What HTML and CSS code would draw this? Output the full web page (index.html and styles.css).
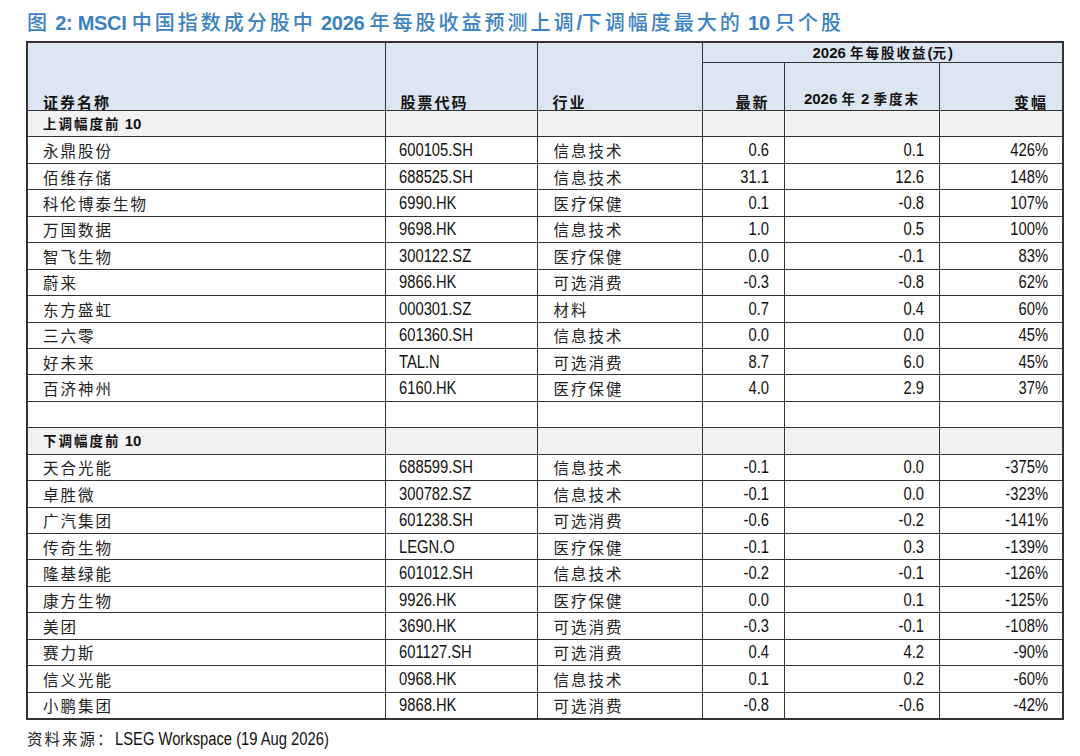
FILE: index.html
```html
<!DOCTYPE html>
<html lang="zh">
<head>
<meta charset="utf-8">
<title>MSCI 中国指数成分股 EPS 预测调整</title>
<link rel="stylesheet" href="styles.css">
</head>
<body>
<div class="page">
  <h1 class="title"><span class="cn">图</span> 2: MSCI <span class="cn">中国指数成分股中</span> 2026 <span class="cn">年每股收益预测上调</span>/<span class="cn">下调幅度最大的</span> 10 <span class="cn">只个股</span></h1>
  <table class="grid">
    <colgroup>
      <col class="c1"><col class="c2"><col class="c3"><col class="c4"><col class="c5"><col class="c6">
    </colgroup>
    <thead>
      <tr class="h1">
        <th rowspan="2" class="hl cnh">证券名称</th>
        <th rowspan="2" class="hl cnh">股票代码</th>
        <th rowspan="2" class="hl cnh">行业</th>
        <th colspan="3" class="hc">2026 <span class="cnh">年每股收益</span>(<span class="cnh">元</span>)</th>
      </tr>
      <tr class="h2">
        <th class="hr cnh">最新</th>
        <th class="hc">2026 <span class="cnh">年</span> 2 <span class="cnh">季度末</span></th>
        <th class="hr cnh">变幅</th>
      </tr>
    </thead>
    <tbody>
      <tr class="sec"><td class="lbl"><span class="cnh">上调幅度前</span> 10</td><td></td><td></td><td></td><td></td><td></td></tr>
      <tr><td class="cn">永鼎股份</td><td><span class="n">600105.SH</span></td><td class="cn">信息技术</td><td class="num"><span class="n">0.6</span></td><td class="num"><span class="n">0.1</span></td><td class="num"><span class="n">426%</span></td></tr>
      <tr><td class="cn">佰维存储</td><td><span class="n">688525.SH</span></td><td class="cn">信息技术</td><td class="num"><span class="n">31.1</span></td><td class="num"><span class="n">12.6</span></td><td class="num"><span class="n">148%</span></td></tr>
      <tr><td class="cn">科伦博泰生物</td><td><span class="n">6990.HK</span></td><td class="cn">医疗保健</td><td class="num"><span class="n">0.1</span></td><td class="num"><span class="n">-0.8</span></td><td class="num"><span class="n">107%</span></td></tr>
      <tr><td class="cn">万国数据</td><td><span class="n">9698.HK</span></td><td class="cn">信息技术</td><td class="num"><span class="n">1.0</span></td><td class="num"><span class="n">0.5</span></td><td class="num"><span class="n">100%</span></td></tr>
      <tr><td class="cn">智飞生物</td><td><span class="n">300122.SZ</span></td><td class="cn">医疗保健</td><td class="num"><span class="n">0.0</span></td><td class="num"><span class="n">-0.1</span></td><td class="num"><span class="n">83%</span></td></tr>
      <tr><td class="cn">蔚来</td><td><span class="n">9866.HK</span></td><td class="cn">可选消费</td><td class="num"><span class="n">-0.3</span></td><td class="num"><span class="n">-0.8</span></td><td class="num"><span class="n">62%</span></td></tr>
      <tr><td class="cn">东方盛虹</td><td><span class="n">000301.SZ</span></td><td class="cn">材料</td><td class="num"><span class="n">0.7</span></td><td class="num"><span class="n">0.4</span></td><td class="num"><span class="n">60%</span></td></tr>
      <tr><td class="cn">三六零</td><td><span class="n">601360.SH</span></td><td class="cn">信息技术</td><td class="num"><span class="n">0.0</span></td><td class="num"><span class="n">0.0</span></td><td class="num"><span class="n">45%</span></td></tr>
      <tr><td class="cn">好未来</td><td><span class="n">TAL.N</span></td><td class="cn">可选消费</td><td class="num"><span class="n">8.7</span></td><td class="num"><span class="n">6.0</span></td><td class="num"><span class="n">45%</span></td></tr>
      <tr><td class="cn">百济神州</td><td><span class="n">6160.HK</span></td><td class="cn">医疗保健</td><td class="num"><span class="n">4.0</span></td><td class="num"><span class="n">2.9</span></td><td class="num"><span class="n">37%</span></td></tr>
      <tr class="blank"><td></td><td></td><td></td><td></td><td></td><td></td></tr>
      <tr class="sec"><td class="lbl"><span class="cnh">下调幅度前</span> 10</td><td></td><td></td><td></td><td></td><td></td></tr>
      <tr><td class="cn">天合光能</td><td><span class="n">688599.SH</span></td><td class="cn">信息技术</td><td class="num"><span class="n">-0.1</span></td><td class="num"><span class="n">0.0</span></td><td class="num"><span class="n">-375%</span></td></tr>
      <tr><td class="cn">卓胜微</td><td><span class="n">300782.SZ</span></td><td class="cn">信息技术</td><td class="num"><span class="n">-0.1</span></td><td class="num"><span class="n">0.0</span></td><td class="num"><span class="n">-323%</span></td></tr>
      <tr><td class="cn">广汽集团</td><td><span class="n">601238.SH</span></td><td class="cn">可选消费</td><td class="num"><span class="n">-0.6</span></td><td class="num"><span class="n">-0.2</span></td><td class="num"><span class="n">-141%</span></td></tr>
      <tr><td class="cn">传奇生物</td><td><span class="n">LEGN.O</span></td><td class="cn">医疗保健</td><td class="num"><span class="n">-0.1</span></td><td class="num"><span class="n">0.3</span></td><td class="num"><span class="n">-139%</span></td></tr>
      <tr><td class="cn">隆基绿能</td><td><span class="n">601012.SH</span></td><td class="cn">信息技术</td><td class="num"><span class="n">-0.2</span></td><td class="num"><span class="n">-0.1</span></td><td class="num"><span class="n">-126%</span></td></tr>
      <tr><td class="cn">康方生物</td><td><span class="n">9926.HK</span></td><td class="cn">医疗保健</td><td class="num"><span class="n">0.0</span></td><td class="num"><span class="n">0.1</span></td><td class="num"><span class="n">-125%</span></td></tr>
      <tr><td class="cn">美团</td><td><span class="n">3690.HK</span></td><td class="cn">可选消费</td><td class="num"><span class="n">-0.3</span></td><td class="num"><span class="n">-0.1</span></td><td class="num"><span class="n">-108%</span></td></tr>
      <tr><td class="cn">赛力斯</td><td><span class="n">601127.SH</span></td><td class="cn">可选消费</td><td class="num"><span class="n">0.4</span></td><td class="num"><span class="n">4.2</span></td><td class="num"><span class="n">-90%</span></td></tr>
      <tr><td class="cn">信义光能</td><td><span class="n">0968.HK</span></td><td class="cn">信息技术</td><td class="num"><span class="n">0.1</span></td><td class="num"><span class="n">0.2</span></td><td class="num"><span class="n">-60%</span></td></tr>
      <tr><td class="cn">小鹏集团</td><td><span class="n">9868.HK</span></td><td class="cn">可选消费</td><td class="num"><span class="n">-0.8</span></td><td class="num"><span class="n">-0.6</span></td><td class="num"><span class="n">-42%</span></td></tr>
    </tbody>
  </table>
  <p class="source"><span class="cn">资料来源：</span><span class="n">LSEG Workspace (19 Aug 2026)</span></p>
</div>
</body>
</html>
```

FILE: styles.css
```css
html, body {
  margin: 0;
  padding: 0;
  background: #ffffff;
}

body {
  font-family: "Liberation Sans", "Noto Sans CJK SC", sans-serif;
  color: #111111;
}

.page {
  padding: 10px 0 0 26px;
}

.title {
  margin: 0 0 6px 1px;
  font-size: 20px;
  line-height: 24px;
  font-weight: 700;
  color: #3a82c4;
  white-space: nowrap;
  letter-spacing: -0.3px;
}

.title .cn {
  font-family: "Noto Sans CJK SC", sans-serif;
  font-weight: 500;
  letter-spacing: 3px;
}

.grid {
  width: 1036px;
  table-layout: fixed;
  border-collapse: collapse;
  border: 2px solid #333333;
}

.c1 { width: 358px; }
.c2 { width: 152px; }
.c3 { width: 165px; }
.c4 { width: 82px; }
.c5 { width: 155px; }
.c6 { width: 124px; }

.grid th,
.grid td {
  border: 1px solid #333333;
  padding: 0 14px 0 15px;
  overflow: hidden;
  white-space: nowrap;
}

.grid thead th {
  background: #dce6f2;
  font-size: 15px;
  line-height: 16px;
  font-weight: 700;
  color: #111111;
}

.h1 th { height: 19px; }
.h2 th { height: 44px; }

.hl {
  text-align: left;
  vertical-align: bottom;
  padding-bottom: 3px;
}

.hc {
  text-align: center;
  vertical-align: middle;
}

.h2 .hc,
.hr {
  vertical-align: bottom;
  padding-bottom: 3px;
}

.hr {
  text-align: right;
}

.cnh {
  font-family: "Noto Sans CJK SC", sans-serif;
  font-size: 13.5px;
  line-height: 16px;
  font-weight: 700;
  letter-spacing: 2px;
}

.grid tbody td {
  height: 25.45px;
  font-size: 18px;
  line-height: 20px;
  vertical-align: middle;
}

.grid tbody td.cn,
.source .cn {
  font-family: "Noto Sans CJK SC", sans-serif;
  font-size: 15.5px;
  line-height: 20px;
  font-weight: 400;
  letter-spacing: 2px;
  color: #222222;
}

.n {
  display: inline-block;
  transform: scaleX(0.82);
  transform-origin: left center;
}

.num .n {
  transform-origin: right center;
}

.grid td:nth-child(2) { padding-left: 13px; }
.grid td:nth-child(3) { padding-left: 16px; }

.num {
  text-align: right;
}

.sec td {
  background: #f2f2f2;
}

.grid tbody td.lbl {
  font-size: 15px;
  line-height: 16px;
  font-weight: 700;
}

.source {
  margin: 8px 0 0 1px;
  font-size: 18px;
  line-height: 22px;
  color: #111111;
  white-space: nowrap;
}
```
